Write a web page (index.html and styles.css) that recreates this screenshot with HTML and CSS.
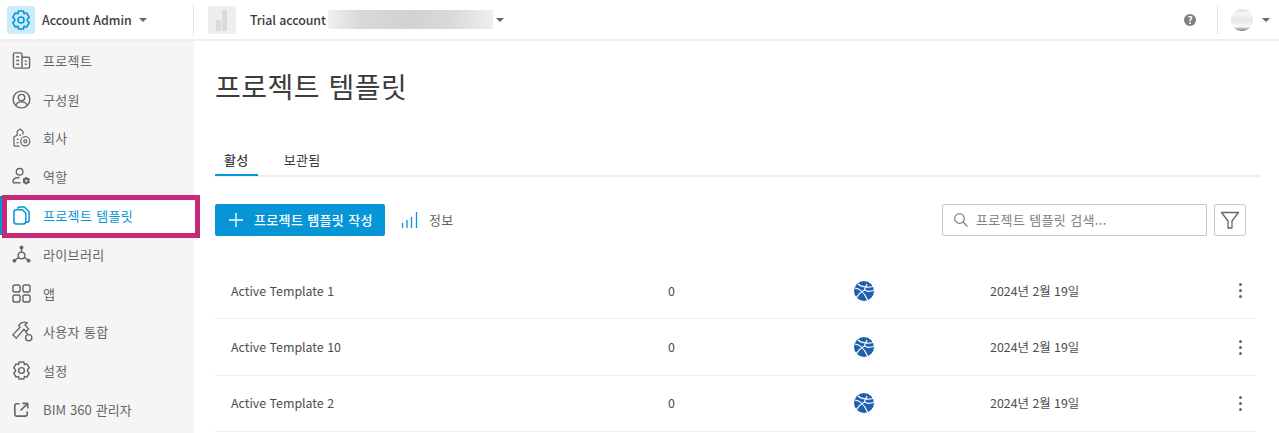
FILE: index.html
```html
<!DOCTYPE html>
<html lang="ko">
<head>
  <meta charset="UTF-8">
  <title>프로젝트 템플릿</title>
  <link rel="stylesheet" href="styles.css">
</head>
<body>
  <header class="topbar">
    <div class="account">
      <span class="app-icon">
        <svg width="20" height="20" viewBox="0 0 20 20" fill="none" stroke="#0696d7" stroke-width="1.600" stroke-linejoin="round"><path d="M7.600 1h4.800l.7 2.700 2.600-.7 2.500 4.200-1.900 2v1.600l1.900 2-2.500 4.200-2.600-.7-.7 2.700H7.600l-.7-2.700-2.600.7-2.500-4.200 1.900-2V9.200l-1.900-2L4.300 3l2.600.7z"/><circle cx="10" cy="10" r="3"/></svg>
      </span>
      <span class="account-name">Account Admin</span>
      <span class="caret"></span>
    </div>
    <div class="project">
      <span class="project-icon">
        <svg width="14" height="22" viewBox="0 0 14 22" fill="#dadada"><rect x="1" y="11" width="5" height="11"/><rect x="7" y="1" width="5" height="21"/></svg>
      </span>
      <span class="project-name">Trial account</span>
      <span class="blurred"></span>
      <span class="caret"></span>
    </div>
    <div class="top-right">
      <span class="help">?</span>
      <span class="top-sep"></span>
      <span class="avatar"></span>
      <span class="caret"></span>
    </div>
  </header>

  <div class="layout">
    <nav class="sidebar">
      <a class="nav-item">
        <svg class="nav-icon" viewBox="0 0 20 20" fill="none" stroke="currentColor" stroke-width="1.500"><rect x="1.500" y="2" width="9" height="16" rx="1.500"/><path d="M10.500 6.500h6.500a1.500 1.500 0 0 1 1.500 1.500v8.500a1.500 1.500 0 0 1-1.500 1.500h-6.500"/><path d="M4.500 6h3M4.500 10h3M4.500 14h3M13.500 10.500h2M13.500 14h2"/></svg>
        프로젝트
      </a>
      <a class="nav-item">
        <svg class="nav-icon" viewBox="0 0 20 20" fill="none" stroke="currentColor" stroke-width="1.500"><circle cx="10" cy="10" r="8.800"/><circle cx="10" cy="8" r="3.400"/><path d="M4 16.500c.8-2.800 3-4 6-4s5.200 1.200 6 4"/></svg>
        구성원
      </a>
      <a class="nav-item">
        <svg class="nav-icon" viewBox="0 0 20 20" fill="none" stroke="currentColor" stroke-width="1.300"><path d="M8 19H3a1 1 0 0 1-1-1V9.500l3.500-2V3.500l3-2.500 3 2.500V7"/><path d="M5 12h2M5 15.500h2M7.500 7.500h2"/><circle cx="14" cy="14" r="4.800"/><circle cx="14" cy="14" r="1.600"/></svg>
        회사
      </a>
      <a class="nav-item">
        <svg class="nav-icon" viewBox="0 0 20 20" fill="none" stroke="currentColor" stroke-width="1.500"><circle cx="8" cy="5" r="3.500"/><path d="M1 16v-1c0-2.800 3-4 7-4M1 16.500h8"/><circle cx="15" cy="14.500" r="2.300" stroke-width="2.200"/><path d="M15 10.500v1.500M15 17v1.500M11.500 12.500l1.300.8M17.200 15.700l1.300.8M11.500 16.500l1.300-.8M17.200 13.300l1.300-.8" stroke-width="1.700"/></svg>
        역할
      </a>
      <a class="nav-item active">
        <svg class="nav-icon" viewBox="0 0 20 20" fill="none" stroke="currentColor" stroke-width="1.600" stroke-linejoin="round"><path d="M6 3a2 2 0 0 1 2-2h5l5 5v9a2 2 0 0 1-2 2h-2"/><path d="M2 6.500a2.500 2.500 0 0 1 2.500-2.500H11l3.500 3.500V16a3 3 0 0 1-3 3H5a3 3 0 0 1-3-3z"/></svg>
        프로젝트 템플릿
      </a>
      <a class="nav-item">
        <svg class="nav-icon" viewBox="0 0 20 20" fill="currentColor" stroke="currentColor" stroke-width="1.500"><path fill="none" d="M10 3v4.500M7 13l-4 3M13 13l4 3"/><circle cx="10" cy="11" r="3.500" fill="none"/><circle cx="10" cy="2.500" r="1.300"/><circle cx="2.500" cy="16.500" r="1.300"/><circle cx="17.500" cy="16.500" r="1.300"/></svg>
        라이브러리
      </a>
      <a class="nav-item">
        <svg class="nav-icon" viewBox="0 0 20 20" fill="none" stroke="currentColor" stroke-width="1.500"><rect x="1" y="1" width="7.500" height="7.500" rx="2.200"/><rect x="11.500" y="1" width="7.500" height="7.500" rx="2.200"/><rect x="1" y="11.500" width="7.500" height="7.500" rx="2.200"/><rect x="11.500" y="11.500" width="7.500" height="7.500" rx="2.200"/></svg>
        앱
      </a>
      <a class="nav-item">
        <svg class="nav-icon hammer" viewBox="0 0 22 22" fill="none" stroke="currentColor" stroke-width="1.400" stroke-linejoin="round"><path d="M.8 14.500 8.500 6.500 7 4.500C9.500 1.500 13 .5 16 2l-2.500 2 4 4.500-2.800 2.500-2.200-2.300L4.500 18z"/><path d="M14 11l3 3.500"/><circle cx="17.500" cy="17.500" r="3.300"/></svg>
        사용자 통합
      </a>
      <a class="nav-item">
        <svg class="nav-icon" viewBox="0 0 20 20" fill="none" stroke="currentColor" stroke-width="1.500" stroke-linejoin="round"><path d="M7.600 1h4.800l.7 2.700 2.600-.7 2.500 4.200-1.900 2v1.600l1.900 2-2.500 4.200-2.600-.7-.7 2.700H7.600l-.7-2.700-2.600.7-2.500-4.200 1.900-2V9.200l-1.900-2L4.300 3l2.600.7z"/><circle cx="10" cy="10" r="3"/></svg>
        설정
      </a>
      <a class="nav-item">
        <svg class="nav-icon" viewBox="0 0 20 20" fill="none" stroke="currentColor" stroke-width="1.700" stroke-linejoin="round"><path d="M8 4H5a2 2 0 0 0-2 2v9a2 2 0 0 0 2 2h9a2 2 0 0 0 2-2v-3"/><path d="M11 3.500h5.500V9M16.500 3.500 9 11"/></svg>
        <span class="latin">BIM 360 관리자</span>
      </a>
    </nav>

    <main class="content">
      <h1 class="page-title">프로젝트 템플릿</h1>

      <div class="tabs">
        <span class="tab selected">활성</span>
        <span class="tab">보관됨</span>
      </div>

      <div class="toolbar">
        <button class="create-btn">
          <svg class="plus" width="14" height="14" viewBox="0 0 14 14" stroke="#fff" stroke-width="1.300"><path d="M7 0v14M0 7h14"/></svg>
          <span class="lift">프로젝트 템플릿 작성</span>
        </button>
        <span class="info">
          <svg width="18" height="18" viewBox="0 0 18 18" fill="none" stroke="#0696d7" stroke-width="1.300"><path d="M1.500 17v-5M6 17V9M10.500 17V6M15.500 17V1"/></svg>
          <span class="lift">정보</span>
        </span>
        <div class="search">
          <svg width="16" height="16" viewBox="0 0 16 16" fill="none" stroke="#808080" stroke-width="1.200"><circle cx="6.500" cy="6.500" r="4.800"/><path d="M10 10l4.500 4.500"/></svg>
          <span class="lift">프로젝트 템플릿 검색...</span>
        </div>
        <button class="filter-btn">
          <svg width="20" height="20" viewBox="0 0 20 20" fill="none" stroke="#666" stroke-width="1.300" stroke-linejoin="round"><path d="M1.500 2.500h17L12 11v7H8v-7z"/></svg>
        </button>
      </div>

      <div class="rows">
        <div class="row">
          <span>Active Template 1</span><span>0</span>
          <svg class="globe" viewBox="0 0 20 20"><circle cx="10" cy="10" r="10" fill="#1f5fae"/><path d="M1 7c5 .5 9 4 12.500 12M4 3c3 3 10 4 15 2.500M10.500 9c-3.500 2-6.500 4-8 8M10.500 9c2 1.500 6 1.500 9.500.5M13 3c-1 2-2 4-2.500 6" fill="none" stroke="#fff" stroke-width="1.200"/></svg>
          <span>2024년 2월 19일</span><span class="dots"><i></i><i></i><i></i></span>
        </div>
        <div class="row">
          <span>Active Template 10</span><span>0</span>
          <svg class="globe" viewBox="0 0 20 20"><circle cx="10" cy="10" r="10" fill="#1f5fae"/><path d="M1 7c5 .5 9 4 12.500 12M4 3c3 3 10 4 15 2.500M10.500 9c-3.500 2-6.500 4-8 8M10.500 9c2 1.500 6 1.500 9.500.5M13 3c-1 2-2 4-2.500 6" fill="none" stroke="#fff" stroke-width="1.200"/></svg>
          <span>2024년 2월 19일</span><span class="dots"><i></i><i></i><i></i></span>
        </div>
        <div class="row">
          <span>Active Template 2</span><span>0</span>
          <svg class="globe" viewBox="0 0 20 20"><circle cx="10" cy="10" r="10" fill="#1f5fae"/><path d="M1 7c5 .5 9 4 12.500 12M4 3c3 3 10 4 15 2.500M10.500 9c-3.500 2-6.500 4-8 8M10.500 9c2 1.500 6 1.500 9.500.5M13 3c-1 2-2 4-2.500 6" fill="none" stroke="#fff" stroke-width="1.200"/></svg>
          <span>2024년 2월 19일</span><span class="dots"><i></i><i></i><i></i></span>
        </div>
      </div>
    </main>
  </div>

  <div class="callout"></div>
</body>
</html>
```

FILE: styles.css
```css
html, body {
  margin: 0;
  height: 433px;
  overflow: hidden;
}

body {
  position: relative;
  font-family: "Noto Sans CJK KR", sans-serif;
  font-size: 13px;
  letter-spacing: 0.35px;
  color: #3c3c3c;
  background: #fff;
}

svg {
  display: block;
  flex: none;
}

/* top bar */
.topbar {
  display: flex;
  align-items: center;
  height: 39px;
  border-bottom: 2px solid #eeeeee;
}

.account {
  display: flex;
  align-items: center;
  width: 194px;
  height: 32px;
  padding-left: 7px;
  box-sizing: border-box;
  border-right: 1px solid #e6e6e6;
}

.app-icon {
  display: flex;
  align-items: center;
  justify-content: center;
  width: 28px;
  height: 28px;
  border-radius: 3px;
  background: #cdeaf7;
}

.account-name {
  margin-left: 7px;
  font-size: 12.4px;
  font-weight: 500;
  letter-spacing: 0;
}

.caret {
  width: 0;
  height: 0;
  margin-left: 7px;
  border-left: 4px solid transparent;
  border-right: 4px solid transparent;
  border-top: 4px solid #666;
}

.project {
  display: flex;
  align-items: center;
  padding-left: 14px;
}

.project-icon {
  display: flex;
  align-items: center;
  justify-content: center;
  width: 28px;
  height: 28px;
  border-radius: 3px;
  background: #eeeeee;
}

.project-name {
  width: 75px;
  margin-left: 14px;
  font-size: 12.4px;
  font-weight: 500;
  letter-spacing: -0.1px;
  white-space: nowrap;
}

.blurred {
  width: 165px;
  height: 19px;
  margin-left: 3px;
  background: linear-gradient(90deg, #f0f0f0, #d8d8d8 20%, #d2d2d2 50%, #dadada 75%, #efefef);
}

.project .caret {
  margin-left: 3px;
}

.top-right {
  display: flex;
  align-items: center;
  margin-left: auto;
  padding-right: 9px;
}

.help {
  width: 12px;
  height: 12px;
  border-radius: 50%;
  background: #7f7f7f;
  color: #fff;
  font-size: 10px;
  font-weight: 700;
  line-height: 12px;
  text-align: center;
  letter-spacing: 0;
}

.top-sep {
  width: 1px;
  height: 28px;
  margin: 0 13px 0 21px;
  background: #e6e6e6;
}

.avatar {
  width: 22px;
  height: 22px;
  border-radius: 50%;
  background: linear-gradient(#dcdcdc 0, #f6f6f6 20%, #e6e6e6 50%, #f8f8f8 80%, #777 100%);
}

.top-right .caret {
  margin-left: 9px;
}

.layout {
  display: flex;
}

/* sidebar */
.sidebar {
  flex: none;
  display: flex;
  flex-direction: column;
  width: 194px;
  height: 392px;
  box-sizing: border-box;
  background: #f5f5f5;
}

.nav-item {
  display: flex;
  align-items: center;
  gap: 12px;
  height: 38.8px;
  flex: none;
  padding-left: 12px;
  color: #666;
}

.nav-icon {
  width: 19px;
  height: 19px;
  color: #666;
}

.nav-icon.hammer {
  width: 21px;
  height: 21px;
  margin-right: -2px;
}

.latin {
  letter-spacing: 0.1px;
}

.nav-item.active {
  background: #fff;
  color: #0696d7;
  box-shadow: inset 2px 0 0 #0696d7;
}

.nav-item.active .nav-icon {
  color: #0696d7;
}

/* main area */
.content {
  flex: 1;
  padding: 0 19px 0 21px;
}

.page-title {
  margin: 24px 0 0;
  font-size: 28px;
  font-weight: 400;
  line-height: 42px;
  letter-spacing: 0.5px;
}

.tabs {
  display: flex;
  gap: 17px;
  height: 40px;
  margin-top: 30px;
  padding-top: 13px;
  box-sizing: border-box;
  border-bottom: 2px solid #eeeeee;
}

.tab {
  height: 24px;
  padding: 0 9px;
  line-height: 20px;
}

.tab.selected {
  font-weight: 500;
  border-bottom: 2px solid #0696d7;
}

.toolbar {
  display: flex;
  align-items: center;
  height: 32px;
  margin-top: 27px;
  margin-right: 14px;
}

.lift {
  padding-bottom: 2px;
}

.create-btn {
  display: flex;
  align-items: center;
  width: 170px;
  height: 32px;
  padding: 0 0 0 14px;
  border: none;
  border-radius: 2px;
  background: #0696d7;
  color: #fff;
  font: inherit;
  font-weight: 500;
  letter-spacing: inherit;
  white-space: nowrap;
}

.plus {
  margin-right: 11px;
}

.info {
  display: flex;
  align-items: center;
  gap: 10px;
  margin-left: 16px;
  color: #666;
}

.search {
  display: flex;
  align-items: center;
  gap: 7px;
  width: 265px;
  height: 32px;
  margin-left: auto;
  padding-left: 10px;
  box-sizing: border-box;
  border: 1px solid #c8c8c8;
  border-radius: 2px;
  color: #808080;
}

.filter-btn {
  display: flex;
  align-items: center;
  justify-content: center;
  width: 32px;
  height: 32px;
  margin-left: 7px;
  padding: 0;
  border: 1px solid #c8c8c8;
  border-radius: 2px;
  background: #fff;
}

/* table */
.rows {
  margin-top: 27px;
  margin-right: 4px;
}

.row {
  display: grid;
  grid-template-columns: 437px 186px 136px 1fr 32px;
  align-items: center;
  height: 56.4px;
  padding-left: 16px;
  box-sizing: border-box;
  border-bottom: 1px solid #eeeeee;
  font-size: 12.4px;
  letter-spacing: 0;
  color: #4d4d4d;
}

.globe {
  width: 20px;
  height: 20px;
}

.dots {
  display: flex;
  flex-direction: column;
  align-items: center;
  gap: 3px;
}

.dots i {
  width: 3px;
  height: 3px;
  border-radius: 50%;
  background: #666;
}

/* annotation drawn over the screenshot */
.callout {
  position: absolute;
  left: 2px;
  top: 195px;
  width: 198px;
  height: 43px;
  box-sizing: border-box;
  border: 5px solid #c52a78;
}
```
